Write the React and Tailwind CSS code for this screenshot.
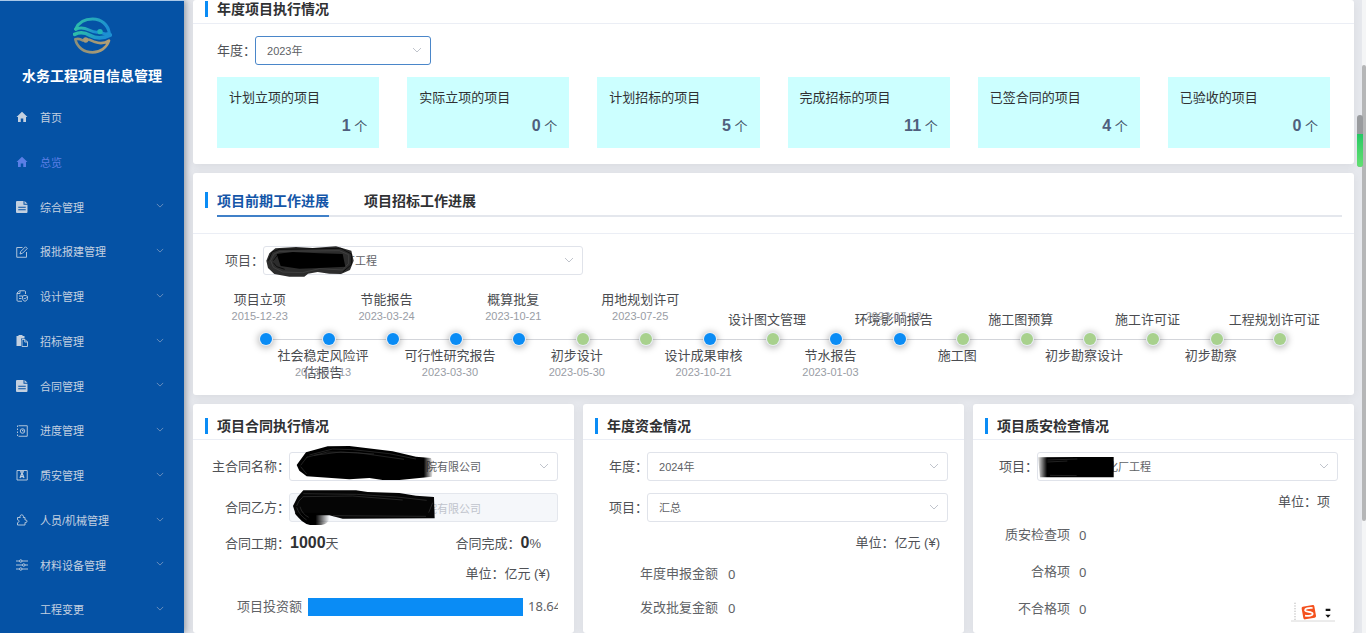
import React from "react";

const BASE = "font-['Liberation_Sans','Noto_Sans_CJK_SC',sans-serif]";

/* ---------- icons ---------- */

function Glyph({ children }) {
  return (
    <svg viewBox="0 0 24 24" className="mb-[2px] h-3 w-3 shrink-0" fill="none" stroke="currentColor" strokeWidth="1.800" aria-hidden="true">
      {children}
    </svg>
  );
}

const HomeIcon = () => (
  <Glyph>
    <path d="M12 1.500 23 12h-3v10h-5.500v-7h-5v7H4V12H1L12 1.500Z" fill="currentColor" stroke="none" />
  </Glyph>
);

const DocIcon = () => (
  <Glyph>
    <path
      fillRule="evenodd"
      d="M2 0h13v7.500h8V22a2 2 0 0 1-2 2H2a2 2 0 0 1-2-2V2a2 2 0 0 1 2-2Zm2.500 11.500v2h15v-2h-15Zm0 5v2h15v-2h-15Z"
      fill="currentColor"
      stroke="none"
    />
    <path d="m17 0 6 5.500h-6V0Z" fill="currentColor" stroke="none" />
  </Glyph>
);

const EditIcon = () => (
  <Glyph>
    <path d="M13 3H1.500v19.500H21V12" />
    <path d="m8 16 1.500-5L19 1.500l3.500 3.500L13 14.500 8 16Z" />
  </Glyph>
);

const DesignIcon = () => (
  <Glyph>
    <path d="M12 22.500H4a2 2 0 0 1-2-2V6l5-4.500h10a2 2 0 0 1 2 2V8M8 2v5H2" />
    <path d="M6 12h7M6 17h5" />
    <path d="m18 10.500 5 2v4c0 3-2 5-5 6-3-1-5-3-5-6v-4l5-2Z" />
    <path d="m15.500 16 2 2 3.500-3.500" />
  </Glyph>
);

const BidIcon = () => (
  <Glyph>
    <path d="M1 2h4V0h8v2h4v5h-7v15H1V2Z" fill="currentColor" stroke="none" />
    <path d="M12 9h6l5 5v9H12V9Z" />
    <path d="M17.500 9v5H23" />
  </Glyph>
);

const ProgressIcon = () => (
  <Glyph>
    <path d="M5 1.500h17.500v21H5" />
    <path d="M3 1v22" strokeDasharray="3 3" />
    <circle cx="13" cy="12" r="4.500" />
    <path d="M13 9.500V12h2.500" />
  </Glyph>
);

const QualityIcon = () => (
  <Glyph>
    <path d="M2 3h20.500v19H2z" />
    <path d="m8 18 4-10 4 10M9.500 15h5M8 5.500h8" strokeWidth="2.500" />
  </Glyph>
);

const PeopleIcon = () => (
  <Glyph>
    <path d="M3 7h5.500a3.500 3.500 0 1 1 6 0H18v5h1.500a2.500 2.500 0 0 1 0 5H18v5H3v-4.500c2-.5 3-1.500 3-3s-1-2.500-3-3V7Z" />
  </Glyph>
);

const MaterialIcon = () => (
  <Glyph>
    <path d="M0 4h7M12 4h12M0 12h13M18 12h6M0 20h7M12 20h12" />
    <circle cx="9.500" cy="4" r="2.500" />
    <circle cx="15.500" cy="12" r="2.500" />
    <circle cx="9.500" cy="20" r="2.500" />
  </Glyph>
);

function Chevron({ className }) {
  return (
    <svg viewBox="0 0 10 6" className={className} fill="none" stroke="currentColor" aria-hidden="true">
      <path d="m1 1 4 4 4-4" />
    </svg>
  );
}

function Logo() {
  return (
    <svg viewBox="0 0 117 111" className="h-[37px] w-[39px]" fill="none" strokeLinecap="round" strokeLinejoin="round" aria-hidden="true">
      <defs>
        <linearGradient id="wave" x1="0" y1="0" x2="1" y2="0.300">
          <stop offset="0" stopColor="#2fc0a6" />
          <stop offset="1" stopColor="#1c8fd2" />
        </linearGradient>
        <linearGradient id="sand" x1="0" y1="0" x2="1" y2="0">
          <stop offset="0" stopColor="#8d8f78" />
          <stop offset="1" stopColor="#b39f74" />
        </linearGradient>
      </defs>
      <path d="M8 36C17 16 36 6 59 6c27 0 46 18 50 42-10 5-18 3-26-2" stroke="url(#wave)" strokeWidth="9" />
      <path d="M8 37c14-8 28-4 40 2 12 6 22 9 32 5" stroke="url(#wave)" strokeWidth="9" />
      <circle cx="81" cy="44" r="8" fill="#22b3b8" />
      <path d="M5 52c18-9 32-5 46 3 18 10 37 11 61-1" stroke="url(#wave)" strokeWidth="11" />
      <path d="M37 68c12-3 19 4 29 7 14 5 29 4 42-4-7 21-26 35-49 35-26 0-47-15-52-39 8-3 15-1 22 3" stroke="url(#sand)" strokeWidth="8" />
      <circle cx="38" cy="69" r="8" fill="#a99a76" />
    </svg>
  );
}

/* ---------- redaction strokes ---------- */

function ScribbleA() {
  return (
    <svg viewBox="231 48 300 87" className="pointer-events-none absolute -left-px -top-px h-[29px] w-[100px] overflow-visible" fill="none" aria-hidden="true">
      <path d="M241 92 250 70 268 55 330 51 380 54 450 49 496 62 503 92 492 120 465 132 430 131 395 126 366 131 355 140 310 140 265 132 246 114Z" fill="#2c2c2c" />
      <path d="M254 92 264 72 282 64 460 62 488 74 488 100 470 120 400 116 350 128 290 126 262 112Z" stroke="#484848" strokeWidth="2" />
      <path d="M247 92 258 66 280 58 465 55 496 72 496 104 470 126M262 92l12-16 20-4M262 98l10 12 24 8" stroke="#0c0c0c" strokeWidth="3" />
      <path d="M272 72 320 66 400 70 470 72 478 110 400 114 340 116 284 108Z" fill="#000" />
    </svg>
  );
}

function ScribbleB() {
  return (
    <svg viewBox="309 156 450 87" className="pointer-events-none absolute -left-px -top-px h-[29px] w-[150px] overflow-visible" fill="none" aria-hidden="true">
      <defs>
        <linearGradient id="fadeB" x1="0" x2="1">
          <stop offset="0.930" stopColor="#000" />
          <stop offset="1" stopColor="#000" stopOpacity="0" />
        </linearGradient>
      </defs>
      <path d="M332 195 360 157 425 139 490 138 620 154 690 170 735 174 742 200 738 230 640 240 590 240 550 234 490 238 362 229 340 212Z" fill="url(#fadeB)" />
      <path d="m370 165 70-18 60 2 110 12 80 16M362 172l62-16 90 2 140 20M384 166l80-10 100 6M344 196l20-26M344 200l18 22" stroke="#333" strokeWidth="2" />
    </svg>
  );
}

function ScribbleC() {
  return (
    <svg viewBox="309 279 450 87" className="pointer-events-none absolute -left-px -top-px h-[29px] w-[150px] overflow-visible" fill="none" aria-hidden="true">
      <defs>
        <linearGradient id="fadeC" x1="0" x2="1">
          <stop offset="0.600" stopColor="#000" />
          <stop offset="1" stopColor="#000" stopOpacity="0" />
        </linearGradient>
      </defs>
      <path d="M321 318 335 290 352 271 510 271 545 276 640 279 690 287 744 291 746 355 470 356 430 346 400 346 330 346Z" fill="#050505" />
      <path d="M326 338h104v20q-4 14-24 17h-34q-26-6-46-37Z" fill="url(#fadeC)" />
      <path d="m352 281 160 2 120 8 90 10M350 290l150-2 150 12M332 318q4-16 18-26M332 322q8 24 30 38M342 320q6 22 26 32M440 347l280 2M728 338l12-30" stroke="#363636" strokeWidth="2" />
    </svg>
  );
}

function ScribbleD() {
  return (
    <svg viewBox="231 156 300 87" className="pointer-events-none absolute -left-px -top-px h-[29px] w-[100px] overflow-visible" fill="none" aria-hidden="true">
      <defs>
        <linearGradient id="fadeD" x1="0" x2="1">
          <stop offset="0" stopColor="#000" stopOpacity="0.100" />
          <stop offset="0.120" stopColor="#000" />
        </linearGradient>
      </defs>
      <path d="m234 172 120-1 107 0v61H240Z" fill="url(#fadeD)" />
      <path d="m262 180 90-3M262 186l60-3M270 226l80 1" stroke="#333" strokeWidth="2" />
    </svg>
  );
}

/* ---------- building blocks ---------- */

function Panel({ children, className = "" }) {
  return <section className={`rounded-[3px] bg-white shadow-[0_2px_10px_rgba(0,0,0,0.06)] ${className}`}>{children}</section>;
}

function Mark() {
  return <span className="h-4 w-[3px] shrink-0 bg-[#0a8cf5]" />;
}

function PanelTitle({ children }) {
  return (
    <header className="flex h-9 items-center gap-[9px] border-b border-[#ebeef5] pl-3 pt-2">
      <Mark />
      <h2 className="text-[14px] font-bold leading-5 text-[#303133]">{children}</h2>
    </header>
  );
}

function Select({ id, value, className = "", pad = "pl-[11px]", tone = "border-[#e0e3ea]", children }) {
  return (
    <div className={`relative flex h-[29px] items-center rounded-[3px] border bg-white ${tone} ${className}`}>
      <select id={id} defaultValue={value} className={`h-full w-full appearance-none bg-transparent pt-[2px] text-[11px] text-[#606266] outline-none ${pad}`}>
        <option value={value}>{value}</option>
      </select>
      <Chevron className="pointer-events-none absolute right-2 top-[10px] h-[6px] w-[10px] text-[#c0c4cc]" />
      {children}
    </div>
  );
}

const label = "-mr-px shrink-0 whitespace-nowrap text-right text-[13px] text-[#505256]";

/* ---------- sidebar ---------- */

const MENU = [
  { text: "首页", Icon: HomeIcon, leaf: true },
  { text: "总览", Icon: HomeIcon, leaf: true, active: true },
  { text: "综合管理", Icon: DocIcon },
  { text: "报批报建管理", Icon: EditIcon },
  { text: "设计管理", Icon: DesignIcon },
  { text: "招标管理", Icon: BidIcon },
  { text: "合同管理", Icon: DocIcon },
  { text: "进度管理", Icon: ProgressIcon },
  { text: "质安管理", Icon: QualityIcon },
  { text: "人员/机械管理", Icon: PeopleIcon },
  { text: "材料设备管理", Icon: MaterialIcon },
  { text: "工程变更" },
];

function Sidebar() {
  return (
    <aside className="z-10 flex w-46 shrink-0 flex-col border-t border-[#a9c8e8] bg-[#0552a5] shadow-[2px_0_6px_rgba(0,21,41,0.35)]">
      <div className="flex h-[95px] flex-col items-center pt-4">
        <Logo />
        <h1 className="mt-[10px] whitespace-nowrap text-[14px] font-bold leading-6 text-white">水务工程项目信息管理</h1>
      </div>
      <nav className="flex flex-1 flex-col">
        {MENU.map(({ text, Icon, leaf, active }) => (
          <a
            key={text}
            href="#"
            className={`flex flex-1 items-center gap-3 pl-4 pr-5 text-[11px] ${active ? "text-[#5b7fe6]" : "text-[#c3d0e0]"}`}
          >
            {Icon ? <Icon /> : <span className="w-3" />}
            <span className="flex-1">{text}</span>
            {!leaf && <Chevron className="mb-1 h-[5px] w-2 text-[#7d9cc4]" />}
          </a>
        ))}
      </nav>
    </aside>
  );
}

/* ---------- yearly panel ---------- */

const STATS = [
  ["计划立项的项目", 1],
  ["实际立项的项目", 0],
  ["计划招标的项目", 5],
  ["完成招标的项目", 11],
  ["已签合同的项目", 4],
  ["已验收的项目", 0],
];

function YearPanel() {
  return (
    <Panel>
      <header className="flex h-6 items-center gap-[9px] border-b border-[#ebeef5] pb-[5px] pl-3">
        <Mark />
        <h2 className="text-[14px] font-bold leading-5 text-[#303133]">年度项目执行情况</h2>
      </header>
      <div className="px-6 pb-4 pt-3">
        <div className="flex items-center">
          <label htmlFor="year" className={label}>年度：</label>
          <Select id="year" value="2023年" className="w-44" tone="border-[#4a86c9]" />
        </div>
        <div className="mt-3 grid grid-cols-6 gap-7">
          {STATS.map(([name, n]) => (
            <div key={name} className="h-[71px] bg-[#ccffff] px-3 pt-3">
              <div className="text-[13px] leading-[18px] text-[#303133]">{name}</div>
              <div className="mt-[9px] text-right text-[13px] leading-5 text-[#46566b]">
                <b className="text-[16px] text-[#4f5f7d]">{n}</b> 个
              </div>
            </div>
          ))}
        </div>
      </div>
    </Panel>
  );
}

/* ---------- progress panel ---------- */

const STEPS = [
  { name: "项目立项", date: "2015-12-23", done: true },
  { name: "社会稳定风险评估报告", date: "2023-07-13", done: true },
  { name: "节能报告", date: "2023-03-24", done: true },
  { name: "可行性研究报告", date: "2023-03-30", done: true },
  { name: "概算批复", date: "2023-10-21", done: true },
  { name: "初步设计", date: "2023-05-30" },
  { name: "用地规划许可", date: "2023-07-25" },
  { name: "设计成果审核", date: "2023-10-21", done: true },
  { name: "设计图文管理", low: true },
  { name: "节水报告", date: "2023-01-03", done: true },
  { name: "环境影响报告", date: "2023-07-12", done: true, low: true },
  { name: "施工图" },
  { name: "施工图预算", low: true },
  { name: "初步勘察设计" },
  { name: "施工许可证", low: true },
  { name: "初步勘察" },
  { name: "工程规划许可证", low: true },
];

function StepText({ name, date, low }) {
  return (
    <div className={`relative w-[92px] text-center ${low ? "pt-5" : ""}`}>
      <div className="h-[17px] text-[13px] leading-[17px] text-[#4a4c50]">{name}</div>
      {date && (
        <div className={`text-[11px] leading-4 text-[#999da5] ${low ? "absolute inset-x-0 top-[17px]" : ""}`}>{date}</div>
      )}
    </div>
  );
}

function Step({ step, index, last }) {
  const above = index % 2 === 0;
  return (
    <li className="flex flex-col items-center">
      <div className="flex h-[42px] justify-center">{above && <StepText {...step} />}</div>
      <div className="relative flex w-full justify-center pl-3">
        {!last && <span className="absolute left-[calc(50%+6px)] top-[6px] h-px w-full bg-[#d3d5da]" />}
        <span
          className={`z-10 h-3 w-3 rounded-full shadow-[0_0_0_1px_#e8eef4,0_1px_7px_2px_rgba(0,0,0,0.28)] ${step.done ? "bg-[#0a8cf5]" : "bg-[#a8d18d]"}`}
        />
      </div>
      <div className="flex h-9 justify-center pt-[2px]">{!above && <StepText {...step} />}</div>
    </li>
  );
}

function ProgressPanel() {
  return (
    <Panel className="h-[222px]">
      <header className="flex h-[61px] gap-[9px] border-b border-[#ebeef5] px-3 pt-[19px]">
        <Mark />
        <div role="tablist" className="-mt-px flex h-[26px] flex-1 gap-[35px] border-b-2 border-[#e4e7ed] text-[14px] font-bold leading-5">
          <button role="tab" aria-selected="true" className="-mb-[2px] flex border-b-2 border-[#4080c8] text-[#1456a8]">
            项目前期工作进展
          </button>
          <button role="tab" aria-selected="false" className="flex text-[#303133]">
            项目招标工作进展
          </button>
        </div>
      </header>
      <div className="flex items-center pl-8 pt-3">
        <label htmlFor="project" className={label}>项目：</label>
        <Select id="project" value="厂工程" className="w-80" pad="pl-20">
          <ScribbleA />
        </Select>
      </div>
      <ol className="ml-[35px] mr-12 mt-4 grid grid-cols-[repeat(17,minmax(0,1fr))]">
        {STEPS.map((s, i) => (
          <Step key={s.name} step={s} index={i} last={i === STEPS.length - 1} />
        ))}
      </ol>
    </Panel>
  );
}

/* ---------- bottom panels ---------- */

function ContractPanel() {
  return (
    <Panel>
      <PanelTitle>项目合同执行情况</PanelTitle>
      <div className="pl-[19px] pr-4 pt-3">
        <div className="flex items-center">
          <label htmlFor="contract" className={`w-[78px] ${label}`}>主合同名称：</label>
          <Select id="contract" value="院有限公司" className="flex-1" pad="pl-[136px]">
            <ScribbleB />
          </Select>
        </div>
        <div className="mt-3 flex items-center">
          <label htmlFor="partyb" className={`w-[78px] ${label}`}>合同乙方：</label>
          <div className="relative h-[29px] flex-1 rounded-[3px] border border-[#e4e7ed] bg-[#f5f7fa]">
            <input id="partyb" disabled defaultValue="院有限公司" className="block h-full w-full bg-transparent pl-[136px] text-[11px] text-[#c0c4cc]" />
            <ScribbleC />
          </div>
        </div>
        <div className="mt-[11px] flex justify-between pl-[13px] pr-[17px] text-[13px] leading-5 text-[#505256]">
          <span>合同工期：<b className="text-[16px] text-[#303133]">1000</b>天</span>
          <span>合同完成：<b className="text-[16px] text-[#303133]">0</b>%</span>
        </div>
        <div className="mt-[10px] pr-2 text-right text-[13px] leading-5 text-[#505256]">单位：亿元 (¥)</div>
        <div className="mt-[11px] flex h-6 items-center overflow-hidden pl-[25px] text-[13px] text-[#606266]">
          <span className="mr-[6px] shrink-0">项目投资额</span>
          <span className="h-[18px] w-[215px] shrink-0 bg-[#0a8cf5]" />
          <span className="ml-[5px] font-['Noto_Sans',sans-serif]">18.6417</span>
        </div>
      </div>
    </Panel>
  );
}

function FundPanel() {
  return (
    <Panel>
      <PanelTitle>年度资金情况</PanelTitle>
      <div className="px-4 pt-3">
        <div className="flex items-center pl-[10px]">
          <label htmlFor="fundyear" className={label}>年度：</label>
          <Select id="fundyear" value="2024年" className="flex-1" />
        </div>
        <div className="mt-3 flex items-center pl-[10px]">
          <label htmlFor="fundproject" className={label}>项目：</label>
          <Select id="fundproject" value="汇总" className="flex-1" />
        </div>
        <div className="mt-[11px] pr-2 text-right text-[13px] leading-5 text-[#505256]">单位：亿元 (¥)</div>
        <dl className="mt-[11px] grid grid-cols-[119px_1fr] gap-x-[10px] gap-y-[14px] text-[13px] leading-5 text-[#606266]">
          <dt className="text-right">年度申报金额</dt>
          <dd className="font-['Noto_Sans',sans-serif]">0</dd>
          <dt className="text-right">发改批复金额</dt>
          <dd className="font-['Noto_Sans',sans-serif]">0</dd>
        </dl>
      </div>
    </Panel>
  );
}

function QualityPanel() {
  return (
    <Panel>
      <PanelTitle>项目质安检查情况</PanelTitle>
      <div className="px-4 pt-3">
        <div className="flex items-center pl-[10px]">
          <label htmlFor="qaproject" className={label}>项目：</label>
          <Select id="qaproject" value="化厂工程" className="flex-1" pad="pl-[69px]">
            <ScribbleD />
          </Select>
        </div>
        <div className="mt-[11px] pr-2 text-right text-[13px] leading-5 text-[#505256]">单位：项</div>
        <dl className="mt-[13px] grid grid-cols-[81px_1fr] gap-x-[9px] gap-y-[17px] text-[13px] leading-5 text-[#606266]">
          <dt className="text-right">质安检查项</dt>
          <dd className="font-['Noto_Sans',sans-serif]">0</dd>
          <dt className="text-right">合格项</dt>
          <dd className="font-['Noto_Sans',sans-serif]">0</dd>
          <dt className="text-right">不合格项</dt>
          <dd className="font-['Noto_Sans',sans-serif]">0</dd>
        </dl>
      </div>
    </Panel>
  );
}

/* ---------- floating items ---------- */

function InputMethodBar() {
  return (
    <svg viewBox="0 0 132 60" className="absolute bottom-[11px] right-[31px] z-20 h-5 w-11" fill="none" aria-hidden="true">
      <path d="M0 0h132v58H0z" fill="#fff" />
      <path d="M0 57h132" stroke="#d8d8d8" strokeWidth="3" />
      <path d="M12 2v54" stroke="#b5b5b5" strokeWidth="3" strokeDasharray="4 4" />
      <path d="m35 14 30-5q4-1 5 4l5 28q1 5-4 6l-28 5q-5 1-6-4l-5-28q-1-5 3-6Z" fill="#f4511e" />
      <path d="M65 18c-14-1-23 2-23 7 0 7 22 2 23 10 0 6-12 8-23 6" stroke="#fff" strokeWidth="5" />
      <path d="M104 20h14v7h-14zM103 38h16l-8 9z" fill="#111" />
    </svg>
  );
}

export default function App() {
  return (
    <div className={`relative flex h-screen overflow-hidden bg-[#e6e8ed] leading-normal ${BASE}`}>
      <Sidebar />
      <main className="flex min-w-0 flex-1 flex-col gap-[9px] pl-[9px] pr-2">
        <YearPanel />
        <ProgressPanel />
        <div className="grid flex-1 grid-cols-3 gap-[9px]">
          <ContractPanel />
          <FundPanel />
          <QualityPanel />
        </div>
      </main>
      <div className="w-1 shrink-0 bg-[#f4f5f6] pt-[65px]">
        <div className="h-[456px] rounded-sm bg-[#b5b6b7]" />
      </div>
      <div className="absolute right-[3px] top-[115px] z-20 flex h-[52px] w-[6px] flex-col overflow-hidden rounded-full bg-[#999b9e]">
        <span className="mt-[19px] flex-1 bg-linear-to-b from-[#22c964] to-[#62e072]" />
      </div>
      <InputMethodBar />
    </div>
  );
}
